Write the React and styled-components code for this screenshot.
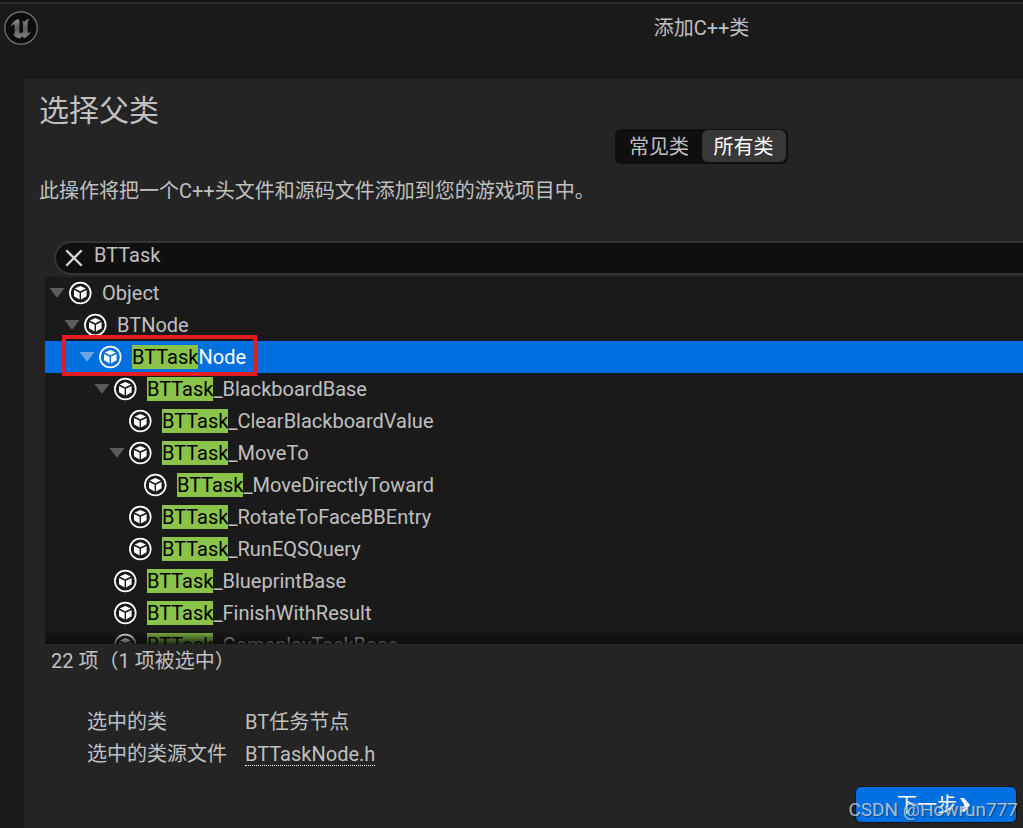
import React from "react";
import styled, { createGlobalStyle } from "styled-components";

const KEYWORD = "BTTask";

const classes = [
  { name: "Object", depth: 0, open: true },
  { name: "BTNode", depth: 1, open: true },
  { name: "BTTaskNode", depth: 2, open: true, selected: true },
  { name: "BTTask_BlackboardBase", depth: 3, open: true },
  { name: "BTTask_ClearBlackboardValue", depth: 4 },
  { name: "BTTask_MoveTo", depth: 4, open: true },
  { name: "BTTask_MoveDirectlyToward", depth: 5 },
  { name: "BTTask_RotateToFaceBBEntry", depth: 4 },
  { name: "BTTask_RunEQSQuery", depth: 4 },
  { name: "BTTask_BlueprintBase", depth: 3 },
  { name: "BTTask_FinishWithResult", depth: 3 },
  { name: "BTTask_GameplayTaskBase", depth: 3 },
];

const UnrealLogo = () => (
  <Logo viewBox="0 0 34 34">
    <defs>
      <linearGradient id="metal" x1="0" y1="0" x2="0" y2="1">
        <stop offset="0" stopColor="#8e8e8e" />
        <stop offset="0.5" stopColor="#5c5c5c" />
        <stop offset="1" stopColor="#808080" />
      </linearGradient>
    </defs>
    <circle cx="17" cy="17" r="16.2" fill="#0b0b0b" stroke="#777" strokeWidth="1.2" />
    <path
      fill="url(#metal)"
      d="M15.2 7.4C11 8.600 7.600 11.800 6.500 16c1.200-1.600 2.400-2.500 3.300-2.500.6 0 .8.5.8 1.200v7.200c0 1.100-.5 1.500-1.500 1.500 1.500 2.300 4 3.700 6.700 4.100l2.500-2.200 1.800 1.900c3.200-1.200 5.800-3.600 7-6.900-1 .9-1.900 1.400-2.500 1.400-.7 0-1-.5-1-1.300v-8.300c0-1.800.9-3.300 2-4.600-2.200.7-4.100 1.900-5.500 3.500-.4-.8-1-1.300-2.100-1.500.8.7 1 1.300 1 2.200v9c-.7.8-1.500 1.400-2.300 1.400-.9 0-1.300-.6-1.300-1.600v-10c0-1.300-.3-2.200-1.200-2.200-.4 0-.9.2-1.400.5.500-.6 1.400-1.100 2.400-1.400z"
    />
  </Logo>
);

const ClassIcon = () => (
  <IconSvg viewBox="0 0 24 24">
    <circle cx="12.300" cy="12" r="10.400" fill="none" stroke="#fff" strokeWidth="1.700" />
    <path fill="#fff" d="M12.300 5l5.600 2.600-5.600 2.700-5.600-2.700z" />
    <path fill="#fff" d="M6 8.900l5.600 2.800v6.700L6 15.300z" />
    <path fill="#fff" d="M18.600 8.900L13 11.700v6.700l5.600-3.100z" />
  </IconSvg>
);

// 匹配到的关键字高亮
const ClassName = ({ name }) => {
  if (!name.startsWith(KEYWORD)) return <span>{name}</span>;
  return (
    <span>
      <Mark>{KEYWORD}</Mark>
      {name.slice(KEYWORD.length)}
    </span>
  );
};

const ClassRow = ({ item }) => (
  <Row $depth={item.depth} $selected={item.selected} role="treeitem" aria-selected={!!item.selected}>
    {item.open ? (
      <Arrow aria-label="折叠" $selected={item.selected}>
        <svg width="16" height="10" viewBox="0 0 16 10">
          <path d="M0.500 0h15L9 8.600q-1 1.200-2 0z" fill="currentColor" />
        </svg>
      </Arrow>
    ) : (
      <ArrowSpace />
    )}
    <ClassIcon />
    <ClassName name={item.name} />
    {item.selected && <RedFrame />}
  </Row>
);

const App = () => {
  return (
    <Window>
      <GlobalStyle />
      <TitleBar>
        <UnrealLogo />
        <Title>添加C++类</Title>
      </TitleBar>
      <Panel>
        <Heading>选择父类</Heading>
        <TabLine>
          <Tabs>
            <Tab>常见类</Tab>
            <Tab $active>所有类</Tab>
          </Tabs>
        </TabLine>
        <Description>此操作将把一个C++头文件和源码文件添加到您的游戏项目中。</Description>

        <SearchBar>
          <ClearButton aria-label="清除">
            <svg width="18" height="18" viewBox="0 0 18 18">
              <path d="M2 2l14 14M16 2L2 16" stroke="#d6d6d6" strokeWidth="2.400" strokeLinecap="round" />
            </svg>
          </ClearButton>
          <SearchInput aria-label="搜索" defaultValue={KEYWORD} />
        </SearchBar>

        <Tree role="tree">
          {classes.map((item) => (
            <ClassRow key={item.name} item={item} />
          ))}
        </Tree>
        <Count>22 项（1 项被选中）</Count>

        <Details>
          <dt>选中的类</dt>
          <dd>BT任务节点</dd>
          <dt>选中的类源文件</dt>
          <dd>
            <SourceLink href="#">BTTaskNode.h</SourceLink>
          </dd>
        </Details>

        <Footer>
          <NextButton>
            下一步
            <svg width="12" height="14" viewBox="0 0 12 14">
              <path d="M1 0h4l6 7-6 7H1l4.500-7z" fill="#fff" />
            </svg>
          </NextButton>
          <Watermark>CSDN @Howrun777</Watermark>
        </Footer>
      </Panel>
    </Window>
  );
};

export default App;

const GlobalStyle = createGlobalStyle`
  * {
    box-sizing: border-box;
  }
  body {
    margin: 0;
    background: #1a1a1a;
    overflow: hidden;
  }
  button, input {
    font: inherit;
    color: inherit;
    border: none;
    padding: 0;
    background: none;
  }
`;
const Window = styled.div`
  display: flex;
  flex-direction: column;
  min-height: 100vh;
  border-top: 2px solid #101010;
  font-family: Roboto, "Noto Sans CJK SC", sans-serif;
  font-size: 20px;
  font-weight: 400;
  line-height: 32px;
  color: #c0c0c0;
`;
const TitleBar = styled.header`
  display: flex;
  height: 77px;
  padding: 7px 0 0 4px;
  border-top: 2px solid #2e2e2e;
  background: #1a1a1a;
`;
const Logo = styled.svg`
  width: 34px;
  height: 34px;
  flex-shrink: 0;
`;
const Title = styled.div`
  flex: 1;
  padding-left: 342px;
  line-height: 34px;
  text-align: center;
`;
const Panel = styled.main`
  flex: 1;
  display: flex;
  flex-direction: column;
  margin-left: 24px;
  background: #242424;
`;
const Heading = styled.h1`
  margin: 13px 0 0 15px;
  font-size: 30px;
  font-weight: 400;
  line-height: 37px;
`;
const TabLine = styled.div`
  display: flex;
  justify-content: center;
  padding-left: 355px;
`;
const Tabs = styled.div`
  display: flex;
  padding: 1px 2px 2px;
  border-radius: 6px;
  background: #0f0f0f;
`;
const Tab = styled.button`
  width: ${(props) => (props.$active ? "84px" : "85px")};
  height: 32px;
  padding-top: 1px;
  border-radius: 6px;
  background: ${(props) => (props.$active ? "#383838" : "transparent")};
  color: ${(props) => (props.$active ? "#ffffff" : "#c0c0c0")};
`;
const Description = styled.p`
  margin: 11px 0 0 15px;
`;
const SearchBar = styled.div`
  display: flex;
  height: 34px;
  margin: 34px 0 2px 30px;
  padding-left: 9px;
  border: 2px solid #343434;
  border-right: none;
  border-radius: 17px 0 0 17px;
  background: #0f0f0f;
`;
const ClearButton = styled.button`
  display: flex;
  align-items: center;
  width: 29px;
  height: 29px;
`;
const SearchInput = styled.input`
  flex: 1;
  height: 24px;
  outline: none;
`;
const Tree = styled.div`
  position: relative;
  height: 367px;
  margin-left: 21px;
  overflow: hidden;
  background: #1a1a1a;

  // 底部阴影
  &::after {
    content: "";
    position: absolute;
    left: 0;
    right: 0;
    bottom: 0;
    height: 14px;
    background: linear-gradient(rgba(10, 10, 10, 0), rgba(10, 10, 10, 0.8));
  }
`;
const Row = styled.div`
  position: relative;
  display: flex;
  align-items: center;
  height: 32px;
  padding-left: ${(props) => props.$depth * 15 + 4}px;
  background: ${(props) => (props.$selected ? "#0070e0" : "transparent")};
  color: ${(props) => (props.$selected ? "#ffffff" : "#c0c0c0")};
`;
const Arrow = styled.button`
  display: flex;
  width: 19px;
  color: ${(props) => (props.$selected ? "#6da7e6" : "#5c5c5c")};
`;
const ArrowSpace = styled.span`
  width: 19px;
`;
const IconSvg = styled.svg`
  width: 24px;
  height: 24px;
  margin-right: 10px;
`;
const Mark = styled.mark`
  background: #8bc24a;
  color: #000000;
`;
const RedFrame = styled.span`
  position: absolute;
  left: 17px;
  top: -6px;
  width: 195px;
  height: 41px;
  border: 4px solid #e51c1f;
  z-index: 1;
`;
const Count = styled.div`
  margin: 1px 0 0 27px;
`;
const Details = styled.dl`
  display: grid;
  grid-template-columns: 158px 1fr;
  margin: 29px 0 0 63px;

  dd {
    margin: 0;
  }
`;
const SourceLink = styled.a`
  display: inline-block;
  line-height: 22px;
  color: inherit;
  text-decoration: none;
  border-bottom: 1px dotted #ffffff;
`;
const Footer = styled.footer`
  position: relative;
  display: flex;
  justify-content: flex-end;
  margin-top: 16px;
  padding: 0 6px 5px 0;
`;
const NextButton = styled.button`
  display: flex;
  align-items: center;
  justify-content: center;
  gap: 2px;
  width: 162px;
  height: 37px;
  padding-right: 4px;
  border: 1px solid #101010;
  border-radius: 6px;
  background: #0070e0;
  color: #ffffff;
`;
const Watermark = styled.span`
  position: absolute;
  right: 5px;
  bottom: 2px;
  font-size: 19px;
  color: rgba(225, 225, 225, 0.75);
  text-shadow: 1px 1px 1px rgba(0, 0, 0, 0.4);
`;
